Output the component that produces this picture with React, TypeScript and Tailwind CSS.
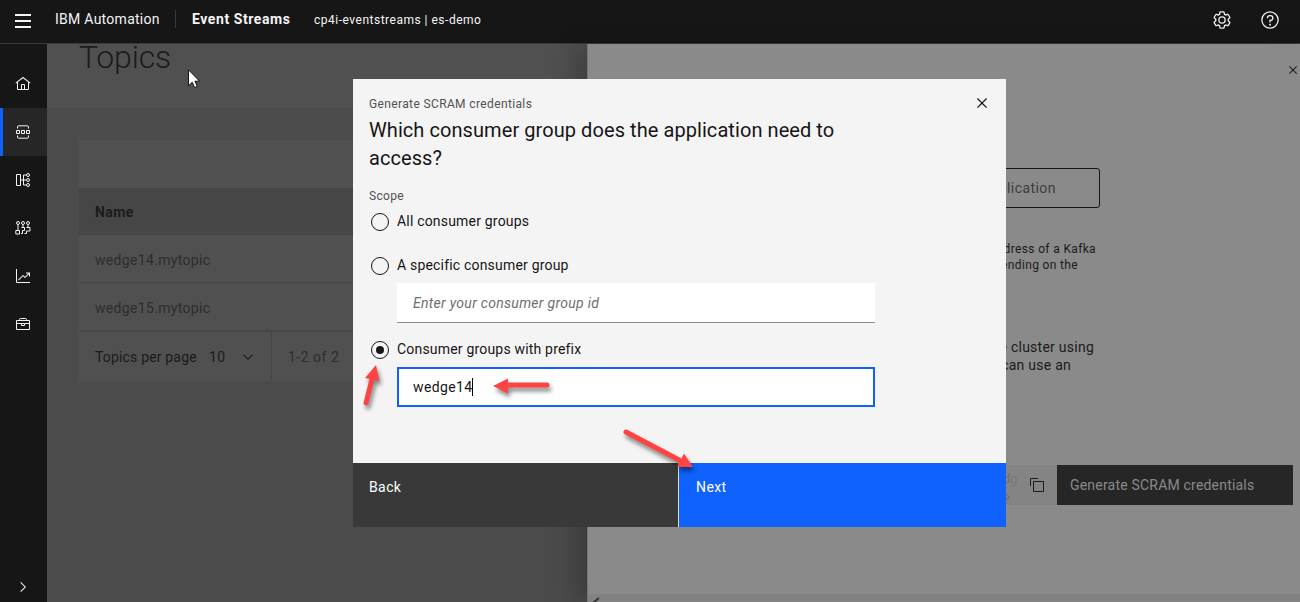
import React from "react";

type IconProps = { className?: string };

const HomeIcon = ({ className = "size-4" }: IconProps) => (
  <svg viewBox="0 0 32 32" fill="currentColor" className={className}>
    <path d="M16.6123,2.2138a1.01,1.01,0,0,0-1.2427,0L1,13.4194l1.2427,1.5717L4,13.6208V26a2.0041,2.0041,0,0,0,2,2H26a2.0037,2.0037,0,0,0,2-2V13.63L29.7573,15,31,13.4282ZM18,26H14V18h4Zm2,0V18a2.0023,2.0023,0,0,0-2-2H14a2.002,2.002,0,0,0-2,2v8H6V12.0615l10-7.79,10,7.8005V26Z" />
  </svg>
);

const TopicsIcon = ({ className = "size-4" }: IconProps) => (
  <svg viewBox="0 0 16 16" fill="none" stroke="currentColor" className={className}>
    <path d="M2.500 4.500V3q0-1.200 1.200-1.200h8.600q1.200 0 1.200 1.200v1.500M2.500 11.500V13q0 1.200 1.200 1.200h8.600q1.200 0 1.200-1.200v-1.500" />
    <path d="M1.500 6.500h3v3h-3zM6.500 6.500h3v3h-3zM11.500 6.500h3v3h-3z" />
  </svg>
);

const SchemaIcon = ({ className = "size-4" }: IconProps) => (
  <svg viewBox="0 0 16 16" fill="none" stroke="currentColor" className={className}>
    <path d="M1.500 2.500h4v11h-4zM6 8h5M11 3H8.500v10H11" />
    <circle cx="13" cy="3" r="1.500" />
    <circle cx="13" cy="8" r="1.500" />
    <circle cx="13" cy="13" r="1.500" />
  </svg>
);

const GroupsIcon = ({ className = "size-4" }: IconProps) => (
  <svg viewBox="0 0 16 16" fill="none" stroke="currentColor" className={className}>
    <circle cx="3" cy="3" r="1.500" />
    <circle cx="8" cy="3" r="1.500" />
    <circle cx="13" cy="3" r="1.500" />
    <path d="M3 4.500v6M8 4.500V7M13 4.500V7M.8 10.500h3.700v3.500H.8zM6.500 7.500h3v3h-2v3H6M11.500 7.500H15v3.500h-3.500v2.500H9.500" />
  </svg>
);

const ChartIcon = ({ className = "size-4" }: IconProps) => (
  <svg viewBox="0 0 32 32" fill="currentColor" className={className}>
    <path d="M4.670 30 4 30a2 2 0 0 1-2-2V2h2v26h26v2Z" />
    <path d="M22 9v2h4.600L20 17.600l-3.300-3.300a1 1 0 0 0-1.400 0L6 23.600 7.400 25 16 16.400l3.300 3.300a1 1 0 0 0 1.400 0L28 12.400V17h2V9Z" />
  </svg>
);

const ToolboxIcon = ({ className = "size-4" }: IconProps) => (
  <svg viewBox="0 0 16 16" fill="none" stroke="currentColor" className={className}>
    <path d="M1.500 4.500h13v9h-13zM4.500 4.500v-1q0-1 1-1h5q1 0 1 1v1M1.500 7.500h5M9.500 7.500h5M6.500 7.500h3v2h-3z" />
  </svg>
);

const SettingsIcon = () => (
  <svg viewBox="0 0 32 32" fill="currentColor" className="size-5">
    <path d="M27,16.76c0-.25,0-.5,0-.76s0-.51,0-.77l1.92-1.68A2,2,0,0,0,29.3,11L26.94,7a2,2,0,0,0-1.73-1,2,2,0,0,0-.64.1l-2.43.82a11.35,11.35,0,0,0-1.31-.75l-.51-2.52a2,2,0,0,0-2-1.61H13.64a2,2,0,0,0-2,1.61l-.51,2.52a11.48,11.48,0,0,0-1.32.75L7.43,6.06A2,2,0,0,0,6.79,6,2,2,0,0,0,5.06,7L2.7,11a2,2,0,0,0,.41,2.51L5,15.24c0,.25,0,.5,0,.76s0,.51,0,.77L3.11,18.45A2,2,0,0,0,2.7,21L5.06,25a2,2,0,0,0,1.73,1,2,2,0,0,0,.64-.1l2.43-.82a11.35,11.35,0,0,0,1.31.75l.51,2.52a2,2,0,0,0,2,1.61h4.72a2,2,0,0,0,2-1.61l.51-2.52a11.48,11.48,0,0,0,1.32-.75l2.42.82a2,2,0,0,0,.64.1,2,2,0,0,0,1.73-1L29.3,21a2,2,0,0,0-.41-2.51ZM25.21,24l-3.43-1.16a8.86,8.86,0,0,1-2.71,1.57L18.36,28H13.64l-.71-3.550a9.36,9.36,0,0,1-2.7-1.570L6.79,24,4.43,20l2.72-2.4a8.9,8.9,0,0,1,0-3.13L4.43,12,6.79,8l3.43,1.160a8.86,8.86,0,0,1,2.71-1.570L13.64,4h4.72l.71,3.550a9.36,9.36,0,0,1,2.7,1.570L25.21,8,27.57,12l-2.72,2.4a8.9,8.9,0,0,1,0,3.13L27.57,20Z" />
    <path d="M16,22a6,6,0,1,1,6-6A5.94,5.94,0,0,1,16,22Zm0-10a3.91,3.91,0,0,0-4,4,3.91,3.91,0,0,0,4,4,3.91,3.91,0,0,0,4-4A3.91,3.91,0,0,0,16,12Z" />
  </svg>
);

const HelpIcon = () => (
  <svg viewBox="0 0 32 32" fill="none" stroke="currentColor" strokeWidth="2" className="size-5">
    <circle cx="16" cy="16" r="13" />
    <path d="M12 13v-.500A3.500 3.500 0 0 1 15.500 9h1.250a3.750 3.750 0 0 1 0 7.500H16V20" />
    <circle cx="16" cy="23.500" r="1.500" fill="currentColor" stroke="none" />
  </svg>
);

const CloseIcon = ({ className = "size-4" }: IconProps) => (
  <svg viewBox="0 0 32 32" fill="currentColor" className={className}>
    <path d="M24 9.400 22.600 8 16 14.600 9.400 8 8 9.400 14.600 16 8 22.600 9.400 24 16 17.400 22.600 24 24 22.600 17.400 16Z" />
  </svg>
);

const CopyIcon = () => (
  <svg viewBox="0 0 32 32" fill="currentColor" className="size-4">
    <path d="M28,10V28H10V10H28m0-2H10a2,2,0,0,0-2,2V28a2,2,0,0,0,2,2H28a2,2,0,0,0,2-2V10a2,2,0,0,0-2-2Z" />
    <path d="M4,18H2V4A2,2,0,0,1,4,2H18V4H4Z" />
  </svg>
);

const ChevronDown = () => (
  <svg viewBox="0 0 16 16" fill="currentColor" className="size-4">
    <path d="M8 11 3 6l.7-.7L8 9.600l4.300-4.300.7.7z" />
  </svg>
);

const ChevronRight = () => (
  <svg viewBox="0 0 16 16" fill="currentColor" className="size-4">
    <path d="m11 8-5 5-.7-.7L9.600 8 5.300 3.700 6 3z" />
  </svg>
);

const Header = () => (
  <header className="flex h-11 shrink-0 items-center border-b border-[#393939] bg-[#161616] text-[#f4f4f4]">
    <svg viewBox="0 0 16 14" fill="currentColor" className="mb-0.5 ml-[15px] h-3.5 w-4">
      <path d="M0 0h16v2H0zM0 6h16v2H0zM0 12h16v2H0z" />
    </svg>
    <span className="mb-[5px] ml-6 w-[120px] text-sm tracking-[0.27px] whitespace-nowrap">IBM Automation</span>
    <span className="mb-1.5 h-[18px] w-px bg-[#393939]" />
    <span className="mb-[5px] ml-4 w-[122px] text-sm font-bold tracking-[0.57px] whitespace-nowrap">Event Streams</span>
    <span className="mb-[3px] text-xs tracking-[0.5px] whitespace-nowrap">cp4i-eventstreams | es-demo</span>
    <div className="mr-[20px] mb-[3px] ml-auto flex gap-7">
      <SettingsIcon />
      <HelpIcon />
    </div>
  </header>
);

const navIcons = [HomeIcon, TopicsIcon, SchemaIcon, GroupsIcon, ChartIcon, ToolboxIcon];

const Sidebar = () => (
  <nav className="flex w-[47px] shrink-0 flex-col bg-[#161616] pt-4 text-[#f4f4f4]">
    {navIcons.map((Icon, i) => (
      <a
        key={i}
        className={
          i === 1
            ? "flex h-12 items-center border-l-[3px] border-[#0f62fe] bg-[#262626] pl-3"
            : "flex h-12 items-center pl-[15px]"
        }
      >
        <Icon />
      </a>
    ))}
    <div className="mt-auto mb-[7px] pl-[15px]">
      <ChevronRight />
    </div>
  </nav>
);

const TopicsPage = () => (
  <main className="flex w-[540px] shrink-0 flex-col bg-[#4b4b4b] text-[#1b1b1b]">
    <div className="h-16 bg-[#505050] pl-8">
      <h1 className="-mt-[7px] text-[32px] leading-10 font-light tracking-[-0.2px]">Topics</h1>
    </div>
    <div className="mt-8 ml-8 text-sm">
      <div className="h-12 bg-[#505050]" />
      <div className="flex h-[47px] items-center bg-[#464646] pt-px pl-4 font-bold tracking-[0.4px]">Name</div>
      {["wedge14.mytopic", "wedge15.mytopic"].map((topic) => (
        <div key={topic} className="flex h-12 items-center border-b border-[#464646] bg-[#505050] pt-[3px] pl-4 tracking-[0.33px] text-[#2d2d2d]">
          {topic}
        </div>
      ))}
      <div className="flex h-[50px] items-center border-t border-[#464646] bg-[#505050] pl-4">
        <span className="w-[114px] tracking-[0.17px]">Topics per page</span>
        <span className="w-[31px] tracking-[0.36px]">10</span>
        <ChevronDown />
        <div className="ml-[15px] flex h-full items-center border-l border-[#464646] pl-4 tracking-[0.5px] text-[#2d2d2d]">1-2 of 2</div>
      </div>
    </div>
  </main>
);

const ConnectPanel = () => (
  <aside className="z-10 flex w-[713px] shrink-0 flex-col border-l border-[#747474] bg-[#8a8a8a] text-[#1b1b1b] shadow-[-12px_0_24px_rgba(0,0,0,0.22)]">
    <div className="flex h-[124px] justify-end pt-[18px] pr-[-1px]">
      <CloseIcon className="-mr-px size-4" />
    </div>
    <div className="flex h-10 w-[512px] items-center justify-end rounded-[3px] border border-[#161616] pr-[43px] text-sm tracking-[0.45px] text-[#3d3d3d]">application</div>
    <div className="mt-[33px] w-[508px] text-right text-xs leading-4 tracking-[0.35px]">
      <p>address of a Kafka</p>
      <p className="pr-[18px]">depending on the</p>
    </div>
    <div className="mt-[65px] w-[506px] text-right text-sm leading-[18px] tracking-[0.25px]">
      <p>the cluster using</p>
      <p className="pr-[23px]">can use an</p>
    </div>
    <div className="mt-[91px] flex h-10 w-[705px] justify-end">
      <div className="flex w-[80px] items-center bg-[#848484] pl-[18px]">
        <div className="flex w-[34px] flex-col pt-[3px] text-[13px] leading-5 text-[#6f6f6f]">
          <p className="pl-2">
            d<span className="opacity-50">g</span>
          </p>
          <span className="pl-1">
            <ChevronRight />
          </span>
        </div>
        <CopyIcon />
      </div>
      <div className="flex w-[236px] items-center bg-[#262626] pl-[13px] text-sm tracking-[0.2px] text-[#8a8a8a]">Generate SCRAM credentials</div>
    </div>
    <div className="mt-auto h-2 overflow-hidden bg-[#828282] pt-[3px]">
      <svg viewBox="0 0 10 10" className="ml-1 size-2.5" fill="none" stroke="#333" strokeWidth="2">
        <path d="M7 1 2 5l5 4" />
      </svg>
    </div>
  </aside>
);

const Radio = ({ label, checked = false }: { label: string; checked?: boolean }) => (
  <label className="flex h-5 items-center gap-2 pl-0.5 text-sm tracking-[0.19px]">
    <span className="mt-px flex size-[18px] items-center justify-center rounded-full border border-[#161616]">
      {checked && <span className="size-2 rounded-full bg-[#161616]" />}
    </span>
    {label}
  </label>
);

const CredentialsModal = () => (
  <section className="absolute top-[79px] left-[353px] z-20 flex h-[448px] w-[653px] flex-col bg-[#f4f4f4] text-[#161616]">
    <div className="flex h-[105px] justify-between pl-4">
      <div className="pt-[17px]">
        <p className="text-xs leading-4 tracking-[0.37px] text-[#525252]">Generate SCRAM credentials</p>
        <h2 className="mt-1 text-xl leading-7 tracking-[0.07px] whitespace-nowrap">
          Which consumer group does the application need to
          <br />
          access?
        </h2>
      </div>
      <CloseIcon className="mt-3.5 mr-3.5 size-5" />
    </div>
    <div className="flex-1 pl-4">
      <p className="mt-1 mb-2 text-xs leading-4 tracking-[0.32px] text-[#525252]">Scope</p>
      <div className="-mt-[1px]">
        <Radio label="All consumer groups" />
      </div>
      <div className="mt-6">
        <Radio label="A specific consumer group" />
      </div>
      <div className="mt-2 ml-7 flex h-10 w-[478px] items-center border-b border-[#8d8d8d] bg-white pl-4 text-sm tracking-[0.3px] text-[#6f6f6f] italic">
        Enter your consumer group id
      </div>
      <div className="mt-4">
        <Radio label="Consumer groups with prefix" checked />
      </div>
      <div className="mt-2 ml-7 flex h-10 w-[478px] items-center border-2 border-[#0f62fe] bg-white pl-3.5 text-sm tracking-[0.38px]">
        <span className="w-[59px]">wedge14</span>
        <span className="h-[18px] w-px bg-black" />
      </div>
    </div>
    <footer className="flex h-16 bg-[#e0e0e0] text-sm tracking-[0.4px] text-white">
      <button className="flex w-[325px] bg-[#393939] pt-3.5 pl-4">Back</button>
      <button className="ml-px flex w-[327px] bg-[#0f62fe] pt-3.5 pl-[17px]">Next</button>
    </footer>
  </section>
);

const Annotations = () => (
  <svg viewBox="0 0 1300 602" className="pointer-events-none absolute inset-0 z-30 h-full w-full drop-shadow-[2px_4px_2px_rgba(0,0,0,0.45)]">
    <g stroke="#ff4343" fill="#ff4343" strokeLinecap="round" strokeWidth="5">
      <path d="M366 403 372 379" />
      <path d="M376 365 365 378 379.500 381Z" stroke="none" />
      <path d="M547 385H506" />
      <path d="M493 386 508 378.500V393.500Z" stroke="none" />
      <path d="M626 432 681 461" />
      <path d="M693 467 684 453.500 677 467Z" stroke="none" />
    </g>
  </svg>
);

const Pointer = () => (
  <svg viewBox="0 0 12 19" className="absolute top-[69px] left-[188px] z-30 h-[19px] w-3">
    <path d="M.5.8v16l3.700-3.600 2.400 5.300 2.700-1.100-2.400-5.200h4.700Z" fill="#fff" stroke="#111122" strokeWidth="1" />
  </svg>
);

export default function App() {
  return (
    <div className="relative flex h-[602px] w-[1300px] flex-col overflow-hidden bg-[#4b4b4b] font-[Roboto,sans-serif]">
      <Header />
      <div className="flex min-h-0 flex-1">
        <Sidebar />
        <TopicsPage />
        <ConnectPanel />
      </div>
      <CredentialsModal />
      <Annotations />
      <Pointer />
    </div>
  );
}
